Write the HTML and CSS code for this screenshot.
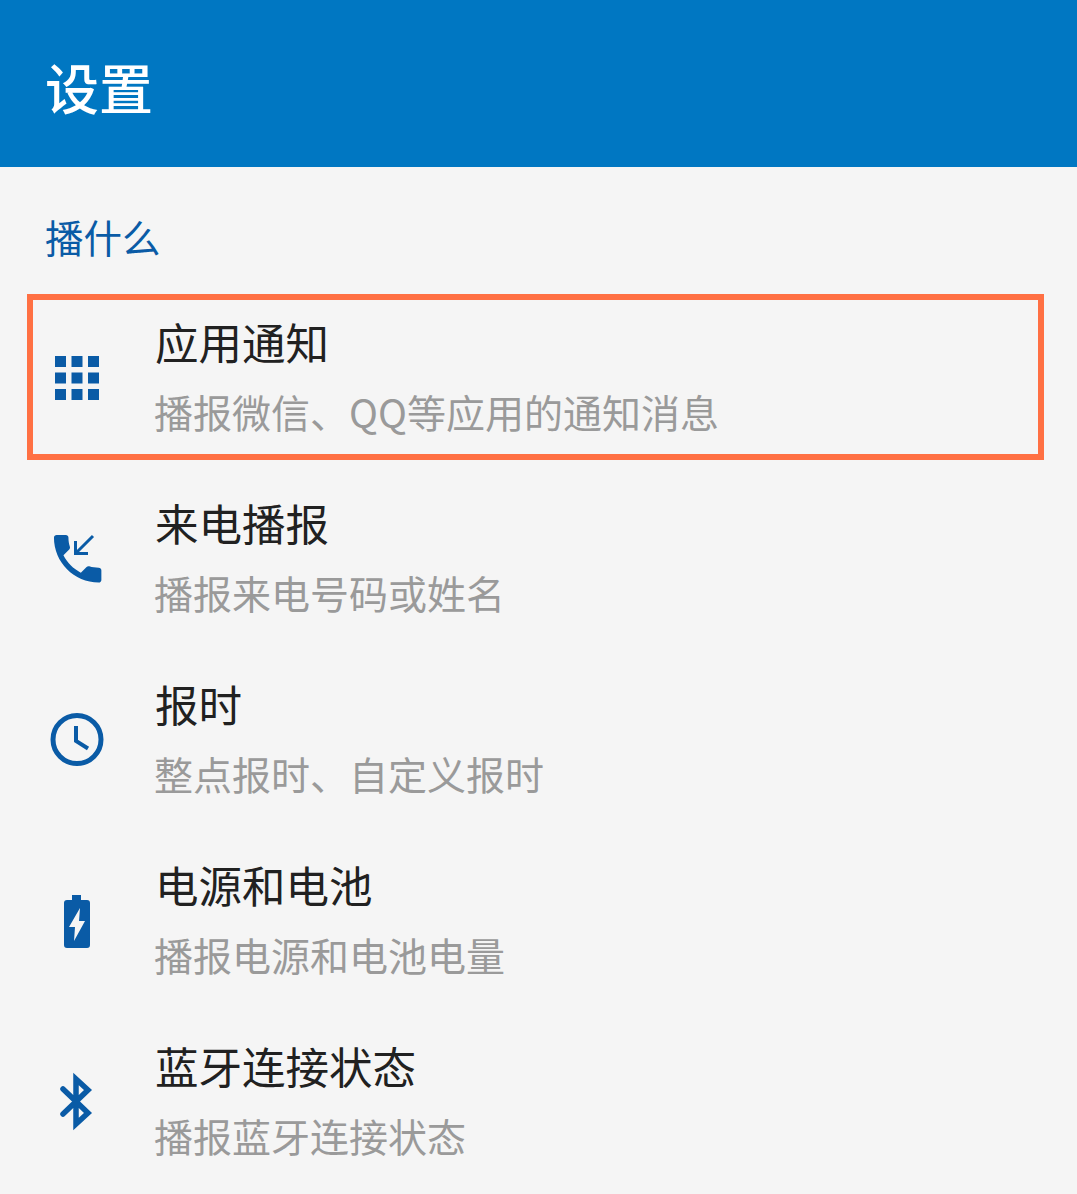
FILE: index.html
```html
<!DOCTYPE html>
<html lang="zh-CN">
<head>
  <meta charset="UTF-8" />
  <title>设置</title>
  <link rel="stylesheet" href="styles.css">
</head>
<body>
  <div class="appbar">设置</div>
  <div class="section-title">播什么</div>

  <div class="list">
    <div class="row highlighted">
      <div class="icon">
        <svg width="66" height="66" viewBox="0 -0.400 24 24"><path d="M4 8h4V4H4v4zm6 12h4v-4h-4v4zm-6 0h4v-4H4v4zm0-6h4v-4H4v4zm6 0h4v-4h-4v4zm6-10v4h4V4h-4zm-6 4h4V4h-4v4zm6 6h4v-4h-4v4zm0 6h4v-4h-4v4z"/></svg>
      </div>
      <div class="text">
        <div class="title">应用通知</div>
        <div class="desc">播报微信、QQ等应用的通知消息</div>
      </div>
    </div>

    <div class="row">
      <div class="icon">
        <svg width="66" height="66" viewBox="0 0 66 66"><path d="M33 42.500c-3.400 0-6.700-.5-9.800-1.500-1-.3-2-.1-2.800.6l-6 6c-7.800-4-14.200-10.300-18.100-18.100l6-6c.8-.7 1-1.800.7-2.800-1-3-1.500-6.300-1.500-9.700 0-1.500-1.200-2.700-2.700-2.700h-9.600c-1.500 0-2.800 1.200-2.800 2.700 0 25.800 20.900 46.800 46.700 46.800 1.500 0 2.700-1.200 2.700-2.700v-9.900c0-1.500-1.200-2.700-2.800-2.700z" transform="translate(23 2) scale(.96)"/><path class="thin" d="M49 11L32 28M31.500 16v12.500H44"/></svg>
      </div>
      <div class="text">
        <div class="title">来电播报</div>
        <div class="desc">播报来电号码或姓名</div>
      </div>
    </div>

    <div class="row">
      <div class="icon">
        <svg width="66" height="66" viewBox="0 0 66 66"><circle class="ring" cx="33" cy="33.500" r="24"/><path class="hand" d="M32 20v15l12 7.500"/></svg>
      </div>
      <div class="text">
        <div class="title">报时</div>
        <div class="desc">整点报时、自定义报时</div>
      </div>
    </div>

    <div class="row">
      <div class="icon">
        <svg width="66" height="66" viewBox="0 0 66 66"><path fill-rule="evenodd" d="M28 8h9v5h6a3 3 0 0 1 3 3v42a3 3 0 0 1-3 3H23a3 3 0 0 1-3-3V16a3 3 0 0 1 3-3h5zM36 21L25 40h6l-1 14 11-20h-6z"/></svg>
      </div>
      <div class="text">
        <div class="title">电源和电池</div>
        <div class="desc">播报电源和电池电量</div>
      </div>
    </div>

    <div class="row">
      <div class="icon">
        <svg width="66" height="66" viewBox="0 0 66 66"><path class="bt" d="M19 21l25 24-12 11V11l12 11-25 24"/></svg>
      </div>
      <div class="text">
        <div class="title">蓝牙连接状态</div>
        <div class="desc">播报蓝牙连接状态</div>
      </div>
    </div>
  </div>
</body>
</html>
```

FILE: styles.css
```css
body {
  margin: 0;
  background: #f5f5f5;
  font-family: "Noto Sans CJK SC", "Noto Sans", sans-serif;
  overflow: hidden;
}
.appbar {
  height: 167px;
  box-sizing: border-box;
  padding: 5px 0 0 45px;
  display: flex;
  align-items: center;
  background: #0077c2;
  color: #fff;
  font-size: 54px;
  font-weight: 500;
}
.section-title {
  height: 127px;
  box-sizing: border-box;
  padding: 41px 0 0 45px;
  color: #0a5ba6;
  font-size: 38.500px;
  line-height: 56px;
}
.list {
  display: flex;
  flex-direction: column;
  gap: 15px;
  padding: 0 33px 0 27px;
}
.row {
  height: 166px;
  flex: none;
  box-sizing: border-box;
  border: 6px solid transparent;
  display: flex;
  align-items: center;
}
.row.highlighted {
  border-color: #ff7043;
}
.icon {
  width: 122px;
  flex: none;
  display: flex;
  justify-content: center;
  box-sizing: border-box;
  padding-right: 34px;
}
.icon svg {
  display: block;
  fill: #0a5ba6;
}
.icon .thin {
  fill: none;
  stroke: #0a5ba6;
  stroke-width: 3;
}
.icon .ring {
  fill: none;
  stroke: #0a5ba6;
  stroke-width: 5;
}
.icon .hand {
  fill: none;
  stroke: #0a5ba6;
  stroke-width: 4;
}
.icon .bt {
  fill: none;
  stroke: #0a5ba6;
  stroke-width: 5.500;
  stroke-linecap: round;
}
.text {
  display: flex;
  flex-direction: column;
  gap: 10px;
  padding-bottom: 4px;
  margin-left: -1px;
}
.title {
  margin-left: 1px;
  color: #212121;
  font-size: 43.500px;
  line-height: 62px;
}
.desc {
  color: #9a9a9a;
  font-size: 39px;
  line-height: 56px;
}
```
